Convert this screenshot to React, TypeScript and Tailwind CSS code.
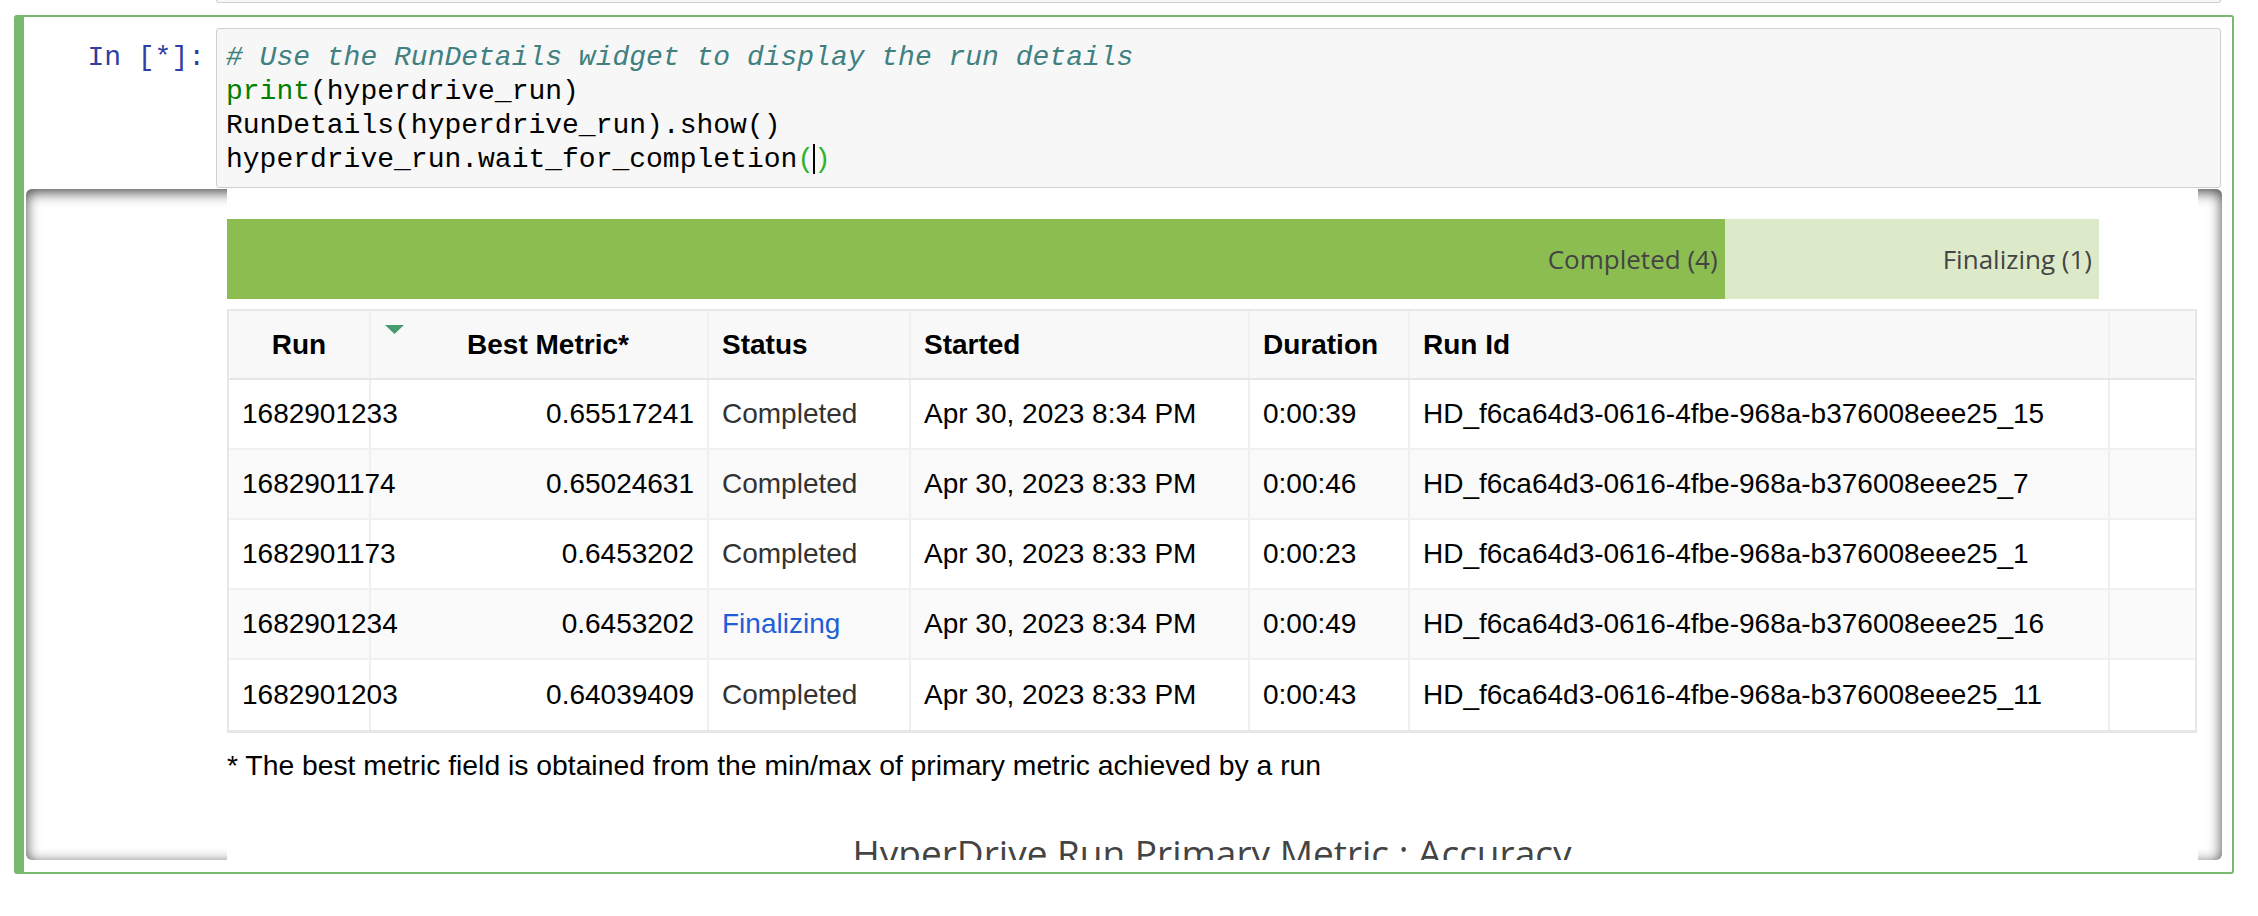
const rows = [
  { run: "1682901233", metric: "0.65517241", status: "Completed", started: "Apr 30, 2023 8:34 PM", dur: "0:00:39", id: "HD_f6ca64d3-0616-4fbe-968a-b376008eee25_15" },
  { run: "1682901174", metric: "0.65024631", status: "Completed", started: "Apr 30, 2023 8:33 PM", dur: "0:00:46", id: "HD_f6ca64d3-0616-4fbe-968a-b376008eee25_7" },
  { run: "1682901173", metric: "0.6453202", status: "Completed", started: "Apr 30, 2023 8:33 PM", dur: "0:00:23", id: "HD_f6ca64d3-0616-4fbe-968a-b376008eee25_1" },
  { run: "1682901234", metric: "0.6453202", status: "Finalizing", started: "Apr 30, 2023 8:34 PM", dur: "0:00:49", id: "HD_f6ca64d3-0616-4fbe-968a-b376008eee25_16" },
  { run: "1682901203", metric: "0.64039409", status: "Completed", started: "Apr 30, 2023 8:33 PM", dur: "0:00:43", id: "HD_f6ca64d3-0616-4fbe-968a-b376008eee25_11" },
];

const cols = "grid grid-cols-[142px_338px_202px_339px_160px_700px_85px]";
const cell = "flex items-center px-[13px] whitespace-nowrap border-r-2 border-[#efefef]";

export default function App() {
  return (
    <div className="w-[2258px] h-[916px] bg-white overflow-hidden font-['Liberation_Sans',Arial,sans-serif] text-black">
      {/* previous cell, bottom edge only */}
      <div className="ml-[216px] w-[2005px] h-[3px] bg-[#f7f7f7] border-x border-b border-[#cfcfcf] rounded-b-[3px]" />

      {/* selected code cell */}
      <div className="mt-[12px] ml-[14px] w-[2220px] h-[859px] border-2 border-l-[10px] border-[#78b96f] rounded-[3px] pt-[11px]">
        <div className="flex">
          <div className="w-[192px] pr-[11px] pt-[13px] text-right font-['Liberation_Mono',monospace] text-[28px] leading-[34px] text-[#303f9f]">
            In&nbsp;[*]:
          </div>
          <div className="w-[2005px] h-[160px] bg-[#f7f7f7] border border-[#cfcfcf] rounded-[3px] pt-[12px] pl-[9px] font-['Liberation_Mono',monospace] text-[28px] leading-[34px] whitespace-pre">
            <div className="italic text-[#408080]"># Use the RunDetails widget to display the run details</div>
            <div>
              <span className="text-[#008000]">print</span>(hyperdrive_run)
            </div>
            <div>RunDetails(hyperdrive_run).show()</div>
            <div>
              hyperdrive_run.wait_for_completion<span className="text-[#2db52d]">(</span>
              <span className="inline-block w-0 h-[30px] border-l-2 border-black align-[-7px] -ml-[1px] -mr-[1px]" />
              <span className="text-[#2db52d]">)</span>
            </div>
          </div>
        </div>

        {/* output scroll area */}
        <div className="mt-[1px] ml-[2px] w-[2196px] h-[671px] rounded-[6px] bg-white shadow-[inset_0_3px_14px_rgba(0,0,0,0.75)] overflow-hidden">
          <div className="ml-[201px] w-[1971px] h-full bg-white overflow-hidden pt-[30px]">
            {/* status bar */}
            <div className="flex w-[1872px] h-[80px] font-['Open_Sans',sans-serif] text-[26px] text-[#444]">
              <div className="w-[80%] bg-[#8bbd51] flex items-center justify-end pr-[7px]">Completed (4)</div>
              <div className="w-[20%] bg-[#ddeac9] flex items-center justify-end pr-[7px]">Finalizing (1)</div>
            </div>

            {/* runs table */}
            <div className="mt-[10px] w-[1970px] border-2 border-b-[3px] border-[#e7e7e7] text-[28px]">
              <div className={`${cols} h-[69px] bg-[#f8f8f8] border-b-2 border-[#e6e6e6] font-bold`}>
                <div className={`${cell} justify-center`}>Run</div>
                <div className={`${cell} relative justify-center pl-[30px] pr-[12px]`}>
                  <svg className="absolute left-[14px] top-[14px]" width="19" height="9" viewBox="0 0 19 9">
                    <polygon points="0,0 19,0 9.5,9" fill="#469c6e" />
                  </svg>
                  Best Metric*
                </div>
                <div className={cell}>Status</div>
                <div className={cell}>Started</div>
                <div className={cell}>Duration</div>
                <div className={cell}>Run Id</div>
                <div />
              </div>
              {rows.map((r, i) => (
                <div
                  key={r.run}
                  className={`${cols} h-[70px] ${i % 2 === 1 ? "bg-[#fafafa]" : "bg-white"} ${i < rows.length - 1 ? "border-b-2 border-[#f0f0f0]" : ""}`}
                >
                  <div className={cell}>{r.run}</div>
                  <div className={`${cell} justify-end`}>{r.metric}</div>
                  <div className={`${cell} ${r.status === "Finalizing" ? "text-[#1f5fd6]" : "text-[#333]"}`}>{r.status}</div>
                  <div className={cell}>{r.started}</div>
                  <div className={cell}>{r.dur}</div>
                  <div className={cell}>{r.id}</div>
                  <div />
                </div>
              ))}
            </div>

            <p className="mt-[16px] text-[28.3px] leading-[32px]">
              * The best metric field is obtained from the min/max of primary metric achieved by a run
            </p>

            <div className="mt-[53px] w-[1970px] text-center font-['Open_Sans',sans-serif] text-[37px] leading-[37px] text-[#444]">
              HyperDrive Run Primary Metric : Accuracy
            </div>
          </div>
        </div>
      </div>
    </div>
  );
}
